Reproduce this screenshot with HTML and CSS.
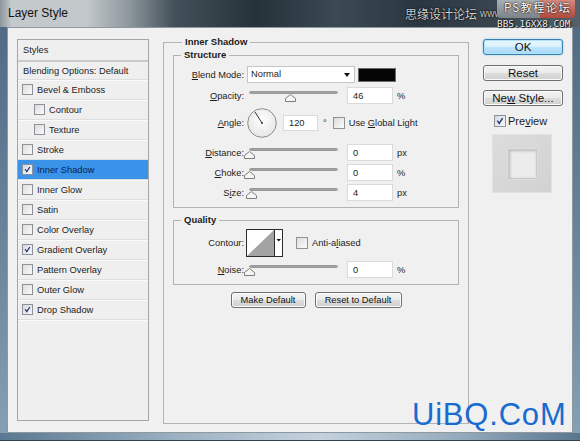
FILE: index.html
```html
<!DOCTYPE html>
<html lang="en">
<head>
  <meta charset="UTF-8" />
  <meta name="viewport" content="width=device-width, initial-scale=1.0"/>
  <title>Layer Style</title>
  <link rel="stylesheet" href="styles.css">
</head>
<body>

  <div class="window">
    <div class="titlebar">
      <span class="title">Layer Style</span>
      <!-- caption buttons + forum stamp sit over the bar -->
      <span class="cap cap-help"></span>
      <span class="cap cap-close"></span>
      <span class="stamp stamp-cn">思缘设计论坛</span>
      <span class="stamp stamp-url">www.missyuan.com</span>
      <span class="stamp stamp-ps">PS教程论坛</span>
      <span class="stamp stamp-bbs">BBS.16XX8.COM</span>
    </div>

    <div class="middle">
      <div class="dialog">

        <div class="styles-list">
          <div class="list-head">Styles</div>
          <div class="list-row plain">Blending Options: Default</div>
          <div class="list-row"><span class="cb"></span>Bevel &amp; Emboss</div>
          <div class="list-row sub"><span class="cb"></span>Contour</div>
          <div class="list-row sub"><span class="cb"></span>Texture</div>
          <div class="list-row"><span class="cb"></span>Stroke</div>
          <div class="list-row active"><span class="cb on"><svg viewBox="0 0 11 11"><path d="M2.6 5.2 L4.6 8.2 L8.4 2.4"/></svg></span>Inner Shadow</div>
          <div class="list-row"><span class="cb"></span>Inner Glow</div>
          <div class="list-row"><span class="cb"></span>Satin</div>
          <div class="list-row"><span class="cb"></span>Color Overlay</div>
          <div class="list-row"><span class="cb on"><svg viewBox="0 0 11 11"><path d="M2.6 5.2 L4.6 8.2 L8.4 2.4"/></svg></span>Gradient Overlay</div>
          <div class="list-row"><span class="cb"></span>Pattern Overlay</div>
          <div class="list-row"><span class="cb"></span>Outer Glow</div>
          <div class="list-row"><span class="cb on"><svg viewBox="0 0 11 11"><path d="M2.6 5.2 L4.6 8.2 L8.4 2.4"/></svg></span>Drop Shadow</div>
        </div>

        <fieldset class="group main-group">
          <legend class="legend-main">Inner Shadow</legend>

          <fieldset class="group structure">
            <legend class="legend-sub">Structure</legend>

            <div class="row">
              <label class="lbl"><u>B</u>lend Mode:</label>
              <div class="select">Normal<span class="caret"></span></div>
              <span class="swatch"></span>
            </div>

            <div class="row gap4">
              <label class="lbl"><u>O</u>pacity:</label>
              <div class="slider"><div class="track"></div><svg class="thumb" style="left: 46%" viewBox="0 0 11 8"><path d="M0.5 7.5 L0.5 4.5 L5.5 0.5 L10.5 4.5 L10.5 7.5 Z"/></svg></div>
              <span class="field">46</span>
              <span class="unit">%</span>
            </div>

            <div class="row angle-row">
              <label class="lbl"><u>A</u>ngle:</label>
              <svg class="dial" viewBox="0 0 30 30">
                <defs>
                  <radialGradient id="dialFill" cx="50%" cy="40%" r="60%">
                    <stop offset="0" stop-color="#ffffff"/>
                    <stop offset="1" stop-color="#e6e6e6"/>
                  </radialGradient>
                </defs>
                <circle cx="15" cy="15" r="14.3" fill="url(#dialFill)" stroke="#8d8d8d" stroke-width="1"/>
                <line x1="15" y1="15" x2="8" y2="4" stroke="#333" stroke-width="1"/>
                <circle cx="15" cy="15" r="1" fill="#333"/>
              </svg>
              <span class="field short">120</span>
              <span class="unit deg">°</span>
              <span class="cb big"></span>
              <span class="cb-text">Use <u>G</u>lobal Light</span>
            </div>

            <div class="row gap6">
              <label class="lbl"><u>D</u>istance:</label>
              <div class="slider"><div class="track"></div><svg class="thumb" style="left: 0%" viewBox="0 0 11 8"><path d="M0.5 7.5 L0.5 4.5 L5.5 0.5 L10.5 4.5 L10.5 7.5 Z"/></svg></div>
              <span class="field">0</span>
              <span class="unit">px</span>
            </div>

            <div class="row gap3">
              <label class="lbl"><u>C</u>hoke:</label>
              <div class="slider"><div class="track"></div><svg class="thumb" style="left: 0%" viewBox="0 0 11 8"><path d="M0.5 7.5 L0.5 4.5 L5.5 0.5 L10.5 4.5 L10.5 7.5 Z"/></svg></div>
              <span class="field">0</span>
              <span class="unit">%</span>
            </div>

            <div class="row gap3">
              <label class="lbl">S<u>i</u>ze:</label>
              <div class="slider"><div class="track"></div><svg class="thumb" style="left: 2%" viewBox="0 0 11 8"><path d="M0.5 7.5 L0.5 4.5 L5.5 0.5 L10.5 4.5 L10.5 7.5 Z"/></svg></div>
              <span class="field">4</span>
              <span class="unit">px</span>
            </div>
          </fieldset>

          <fieldset class="group quality">
            <legend class="legend-sub">Quality</legend>

            <div class="row contour-row">
              <label class="lbl">Contour:</label>
              <svg class="contour" viewBox="0 0 37 28">
                <rect x="0.5" y="0.5" width="36" height="27" fill="#fff" stroke="#2b2b2b"/>
                <polygon points="1,27 28,1 28,27" fill="#a3a3a3"/>
                <line x1="28.5" y1="1" x2="28.5" y2="27" stroke="#2b2b2b"/>
                <polygon points="30.5,10 35,10 32.75,12.5" fill="#111"/>
              </svg>
              <span class="cb big aa"></span>
              <span class="cb-text">Anti-a<u>l</u>iased</span>
            </div>

            <div class="row gap4">
              <label class="lbl"><u>N</u>oise:</label>
              <div class="slider"><div class="track"></div><svg class="thumb" style="left: 0%" viewBox="0 0 11 8"><path d="M0.5 7.5 L0.5 4.5 L5.5 0.5 L10.5 4.5 L10.5 7.5 Z"/></svg></div>
              <span class="field">0</span>
              <span class="unit">%</span>
            </div>
          </fieldset>

          <div class="defaults">
            <button class="btn small">Make Default</button>
            <button class="btn small wide">Reset to Default</button>
          </div>
        </fieldset>

        <div class="actions">
          <button class="btn big ok">OK</button>
          <button class="btn big">Reset</button>
          <button class="btn big">Ne<u>w</u> Style...</button>
          <div class="preview-row">
            <span class="cb big on"><svg viewBox="0 0 11 11"><path d="M2.6 5.2 L4.6 8.2 L8.4 2.4"/></svg></span>
            <span class="preview-text">Pre<u>v</u>iew</span>
          </div>
          <div class="preview-box"><div class="preview-inner"></div></div>
        </div>

      </div>
    </div>

    <div class="frame-bottom"></div>
    <span class="site-mark">UiBQ.CoM</span>
  </div>

</body>
</html>
```

FILE: styles.css
```css
body {
  margin: 0;
  font-family: 'Liberation Sans', Arial, sans-serif;
  font-size: 9.3px;
  color: #1c1c1c;
}
.window {
  position: relative;
  width: 580px;
  height: 441px;
  display: flex;
  flex-direction: column;
  background: linear-gradient(to bottom, #4d6880, #6c879e 60%, #86a0b5);
  overflow: hidden;
}
.titlebar {
  position: relative;
  height: 27px;
  flex: none;
  background: linear-gradient(90deg, #8c969c 0, #c4c9cc 2%, #c2c7ca 15%, #8f999f 22%, #44515a 30%, #26323a 44%, #3a4953 58%, #2a3740 72%, #39464f 86%, #55626b 100%);
}
.title {
  position: absolute;
  left: 8px;
  top: 6px;
  font-size: 12px;
  color: #111;
}
.cap {
  position: absolute;
  top: 0;
  height: 18px;
}
.cap-help {
  left: 497px;
  width: 43px;
  background: linear-gradient(#a9afb3, #7c8489);
  border-radius: 0 0 0 4px;
}
.cap-close {
  left: 540px;
  width: 35px;
  background: linear-gradient(#d48a80, #b0493c);
  border-radius: 0 0 4px 0;
}
.stamp {
  position: absolute;
  white-space: nowrap;
  color: #e6e6e6;
  text-shadow: 0 0 2px #000, 0 0 1px #000;
}
.stamp-cn {
  left: 405px;
  top: 7px;
  font-family: 'Noto Sans CJK SC', sans-serif;
  font-size: 12px;
  line-height: 14px;
  color: #cfcfcf;
}
/* the rest of the url runs under the caption buttons */
.stamp-url {
  left: 480px;
  top: 8px;
  width: 17px;
  overflow: hidden;
  font-size: 10px;
  line-height: 11px;
  color: #c8c8c8;
}
.stamp-ps {
  left: 504px;
  top: 1px;
  font-family: 'Noto Sans CJK SC', sans-serif;
  font-size: 11.5px;
  line-height: 13px;
  color: #fff;
  letter-spacing: 1.2px;
}
.stamp-bbs {
  left: 497px;
  top: 19px;
  font-family: 'DejaVu Sans Mono', monospace;
  font-size: 9.4px;
  line-height: 9px;
  color: #f4f4f4;
  text-shadow: 0 0 1px #000, 1px 1px 1px #000;
}
.middle {
  flex: none;
  height: 406px;
  padding: 0 7px;
  display: flex;
}
.dialog {
  flex: 1;
  display: flex;
  align-items: flex-start;
  background: #f0f0f0;
  border: 1px solid #8e989f;
  padding: 8px 9px 0 9px;
}
.frame-bottom {
  flex: 1;
  background: linear-gradient(90deg, #5a7891, #9bb0c1 30%, #c4d2dd 55%, #93a9bb 80%, #5b7690);
  border-bottom: 1px solid #2f4253;
}

/* styles list */
.styles-list {
  width: 132px;
  height: 382px;
  flex: none;
  margin: 3px 14px 0 0;
  box-sizing: border-box;
  border: 1px solid #a6a6a6;
  background: #efefef;
}
.list-head {
  height: 20px;
  line-height: 20px;
  padding-left: 5px;
  border-bottom: 2px solid #c9c9c9;
}
.list-row {
  height: 19px;
  display: flex;
  align-items: center;
  padding-left: 4px;
  border-bottom: 1px solid #dedede;
  box-shadow: 0 1px 0 #fafafa;
}
.list-row.plain {
  height: 17px;
  padding-left: 5px;
}
.list-row.sub {
  padding-left: 16px;
}
.list-row.active {
  background: #3a93e9;
  color: #0c1f4d;
}
.cb {
  width: 11px;
  height: 11px;
  flex: none;
  box-sizing: border-box;
  border: 1px solid #8e9296;
  background: linear-gradient(135deg, #dcdcdc, #fbfbfb);
  margin-right: 4px;
  display: inline-flex;
}
.cb.big {
  width: 12px;
  height: 12px;
}
.cb svg {
  width: 100%;
  height: 100%;
}
.cb svg path {
  fill: none;
  stroke: #27356e;
  stroke-width: 1.5;
}

/* inner shadow panel */
.group {
  margin: 0;
  border: 1px solid #b3b3b3;
  min-width: 0;
}
.group legend {
  padding: 0 3px;
  line-height: 12px;
  font-weight: bold;
  font-size: 9.5px;
  background: #f0f0f0;
}
.main-group {
  width: 306px;
  height: 388px;
  flex: none;
  box-sizing: border-box;
  padding: 0 9px;
  margin-right: 14px;
}
.legend-main {
  margin-left: 9px;
}
.legend-sub {
  margin-left: 7px;
}
.structure {
  margin-top: 1px;
  padding: 5px 0 6px 0;
}
.quality {
  margin-top: 6px;
  padding: 3px 0 6px 0;
}
.row {
  display: flex;
  align-items: center;
  height: 17px;
}
.row.gap3 { margin-top: 3px; }
.row.gap4 { margin-top: 4px; }
.row.gap6 { margin-top: 6px; }
.lbl {
  width: 70px;
  flex: none;
  text-align: right;
  margin-right: 3px;
}
.select {
  width: 108px;
  height: 17px;
  box-sizing: border-box;
  background: #fff;
  border: 1px solid #c5c5c5;
  padding-left: 3px;
  line-height: 15px;
  position: relative;
}
.caret {
  position: absolute;
  right: 4px;
  top: 6px;
  border-left: 3.5px solid transparent;
  border-right: 3.5px solid transparent;
  border-top: 4px solid #111;
}
.swatch {
  width: 38px;
  height: 14px;
  box-sizing: border-box;
  margin-left: 3px;
  background: #050505;
  border: 1px solid #6b6b6b;
}
.slider {
  position: relative;
  width: 89px;
  height: 17px;
  margin-left: 2px;
  flex: none;
}
.track {
  margin-top: 4px;
  height: 3px;
  border-radius: 2px;
  background: linear-gradient(#7a7a7a, #a8a8a8 60%, #d8d8d8);
  border: 1px solid #9a9a9a;
  box-sizing: border-box;
}
.thumb {
  position: absolute;
  top: 7px;
  width: 11px;
  height: 8px;
  margin-left: -5px;
}
.thumb path {
  fill: #f6f6f6;
  stroke: #7d7d7d;
  stroke-width: 1;
}
.field {
  width: 46px;
  height: 17px;
  box-sizing: border-box;
  margin-left: 9px;
  background: #fff;
  border: 1px solid #dadada;
  padding-left: 5px;
  line-height: 16px;
}
.field.short {
  width: 35px;
  margin-left: 6px;
  height: 16px;
  line-height: 15px;
}
.unit {
  margin-left: 4px;
}
.unit.deg {
  margin-left: 5px;
  margin-right: 6px;
}
.angle-row {
  height: 30px;
  margin-top: 4px;
}
.dial {
  width: 30px;
  height: 30px;
  flex: none;
}
.cb-text {
  white-space: nowrap;
}
.contour-row {
  height: 28px;
}
.contour {
  width: 37px;
  height: 28px;
  flex: none;
  margin-left: -1px;
}
.cb.aa {
  margin-left: 13px;
}
.defaults {
  display: flex;
  justify-content: center;
  gap: 9px;
  margin-top: 7px;
}

/* buttons */
.btn {
  font-family: 'Liberation Sans', Arial, sans-serif;
  color: #111;
  border: 1px solid #707070;
  border-radius: 3px;
  background: linear-gradient(#f3f3f3, #ebebeb 48%, #dddddd 52%, #cfcfcf);
  box-shadow: inset 0 0 0 1px #fcfcfc;
  padding: 0;
  margin: 0;
}
.btn.small {
  width: 75px;
  height: 16px;
  font-size: 9.3px;
}
.btn.small.wide {
  width: 87px;
}
.btn.big {
  display: block;
  width: 80px;
  height: 16px;
  font-size: 11.5px;
  line-height: 14px;
}
.btn.ok {
  border-color: #3c7fb1;
  background: linear-gradient(#eaf6fd, #d9f0fc 48%, #bee6fd 52%, #a7d9f5);
  box-shadow: inset 0 0 0 1px #aee3fb, 0 0 2px #6ec8f0;
}
.actions {
  width: 80px;
  flex: none;
  margin-top: 3px;
}
.actions .btn + .btn {
  margin-top: 10px;
}
.actions .btn + .btn + .btn {
  margin-top: 9px;
}
.preview-row {
  display: flex;
  align-items: center;
  margin: 9px 0 0 11px;
  height: 12px;
}
.cb.on {
  background: linear-gradient(135deg, #d4d9e6, #f6f7fb);
}
.preview-row .cb {
  margin-right: 2px;
}
.preview-text {
  font-size: 11px;
}
.preview-box {
  width: 60px;
  height: 59px;
  margin: 7px 0 0 9px;
  box-sizing: border-box;
  background: linear-gradient(135deg, #dcdcdc, #d2d2d2);
  border: 1px solid #e2e2e2;
  display: flex;
  align-items: center;
  justify-content: center;
}
.preview-inner {
  width: 29px;
  height: 30px;
  box-sizing: border-box;
  background: #ececec;
  border: 1px solid #c9c9c9;
  box-shadow: inset 1px 1px 3px #b8b8b8, 0 0 1px #fff;
}
.site-mark {
  position: absolute;
  left: 412px;
  top: 397px;
  font-size: 31px;
  letter-spacing: 0.8px;
  color: #1a6bd0;
  line-height: 36px;
}
```
